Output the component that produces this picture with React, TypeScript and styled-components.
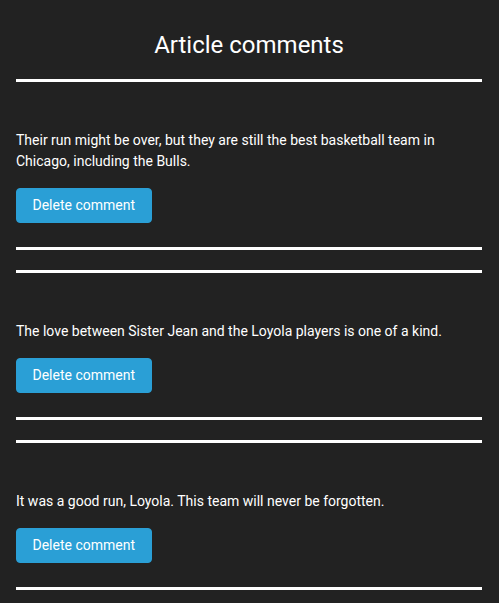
import React from "react";
import styled, { createGlobalStyle } from "styled-components";

const GlobalStyle = createGlobalStyle`
  html, body {
    margin: 0;
    padding: 0;
    background: #222222;
  }
  body {
    font-family: Roboto, "Liberation Sans", Arial, sans-serif;
    color: #ffffff;
  }
`;

const Page = styled.main`
  display: flex;
  flex-direction: column;
  padding: 0 17px 0 16px;
  min-height: 603px;
  box-sizing: border-box;
`;

const Header = styled.header`
  display: flex;
  flex-direction: column;
  padding-top: 31px;
`;

const Title = styled.h1`
  margin: 0 0 20px;
  font-size: 24px;
  line-height: 28px;
  font-weight: 400;
  text-align: center;
  color: #ffffff;
`;

const Rule = styled.hr<{ $gapTop?: number }>`
  margin: ${(p) => p.$gapTop ?? 0}px 0 0;
  border: 0;
  height: 3px;
  background: #ffffff;
  width: 100%;
`;

const CommentBlock = styled.article`
  display: flex;
  flex-direction: column;
  align-items: flex-start;
`;

const CommentText = styled.p`
  margin: 48px 0 16px;
  font-size: 14px;
  line-height: 21px;
  color: #ffffff;
`;

const DeleteButton = styled.button`
  font-family: Roboto, "Liberation Sans", Arial, sans-serif;
  font-size: 14px;
  line-height: 21px;
  padding: 6px 15.5px;
  border: 1px solid #2a9fd6;
  border-radius: 4px;
  background: #2a9fd6;
  color: #ffffff;
  cursor: pointer;
  margin-bottom: 24px;
`;

const comments = [
  "Their run might be over, but they are still the best basketball team in Chicago, including the Bulls.",
  "The love between Sister Jean and the Loyola players is one of a kind.",
  "It was a good run, Loyola. This team will never be forgotten.",
];

export default function App() {
  return (
    <>
      <GlobalStyle />
      <Page>
        <Header>
          <Title>Article comments</Title>
          <Rule />
        </Header>
        {comments.map((c, i) => (
          <CommentBlock key={i}>
            {i > 0 && <Rule $gapTop={20} />}
            <CommentText>{c}</CommentText>
            <DeleteButton>Delete comment</DeleteButton>
            <Rule />
          </CommentBlock>
        ))}
      </Page>
    </>
  );
}
